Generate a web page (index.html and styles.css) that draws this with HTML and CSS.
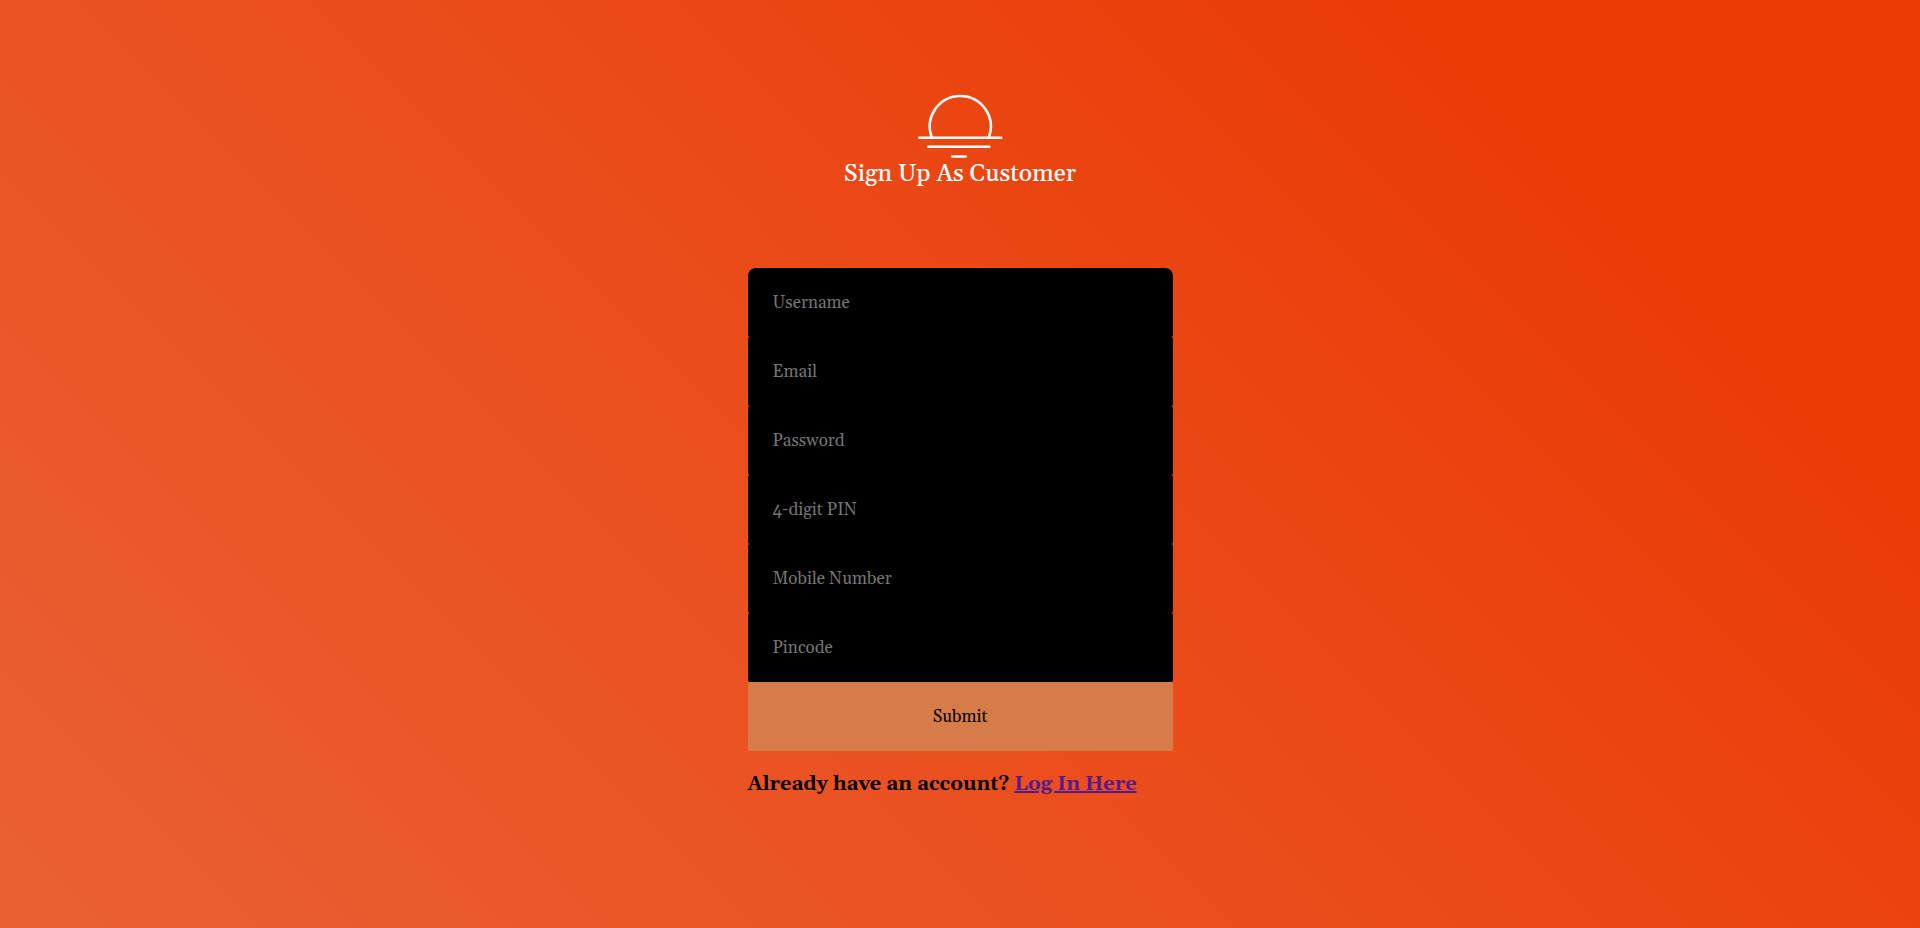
FILE: index.html
```html
<!DOCTYPE html>
<html lang="en">
<head>
<meta charset="utf-8">
<title>Sign Up As Customer</title>
<link rel="stylesheet" href="styles.css">
</head>
<body>
<main class="signup">
  <header class="brand">
    <svg class="logo" viewBox="0 0 86 67" fill="none" stroke="#fff" stroke-width="2.5" stroke-linecap="round" aria-hidden="true">
      <path d="M14.7 44A30.5 30.5 0 1 1 71.9 44M2.3 44.7H84.3M11.3 53.7H72.3M35.3 63.4H48.7"/>
    </svg>
    <h1 class="title">Sign Up As Customer</h1>
  </header>
  <form class="form">
    <input class="field" type="text" placeholder="Username" aria-label="Username">
    <input class="field" type="email" placeholder="Email" aria-label="Email">
    <input class="field" type="password" placeholder="Password" aria-label="Password">
    <input class="field" type="password" placeholder="4-digit PIN" aria-label="4-digit PIN">
    <input class="field" type="tel" placeholder="Mobile Number" aria-label="Mobile Number">
    <input class="field" type="text" placeholder="Pincode" aria-label="Pincode">
    <button class="submit" type="submit">Submit</button>
  </form>
  <h2 class="login">Already have an account? <a class="link" href="#">Log In Here</a></h2>
</main>
</body>
</html>
```
FILE: styles.css
```css
* {
  box-sizing: border-box;
}

body {
  margin: 0;
  min-height: 100vh;
  font-family: Georgia, Gelasio, "Liberation Serif", serif;
  background: linear-gradient(45deg, #e96133 0%, #ea5221 35%, #ea430f 67%, #ea3902 87%) no-repeat;
}

.signup {
  width: 100%;
  max-width: 425px;
  margin: 0 auto;
  padding: 93px 0 40px;
}

.brand {
  display: flex;
  flex-direction: column;
  align-items: center;
  margin-bottom: 80px;
}

.logo {
  width: 86px;
  height: 67px;
}

.title {
  margin: 0;
  color: #fff;
  font-size: 24px;
  font-weight: 500;
  line-height: 28px;
}

.form {
  display: flex;
  flex-direction: column;
}

.field,
.submit {
  width: 100%;
  height: 69px;
  padding: 0 25px;
  border: 0;
  border-radius: 2px;
  font-family: inherit;
  font-size: 17px;
}

.field {
  background: #000;
  color: #fff;
}

.field:first-child {
  border-radius: 8px 8px 2px 2px;
}

.field::placeholder {
  color: #757575;
}

.submit {
  background: #d67c49;
  color: #000;
}

.login {
  margin: 20px 0 0;
  font-size: 20px;
  line-height: 26px;
}

.link {
  color: #551a8b;
}
```
